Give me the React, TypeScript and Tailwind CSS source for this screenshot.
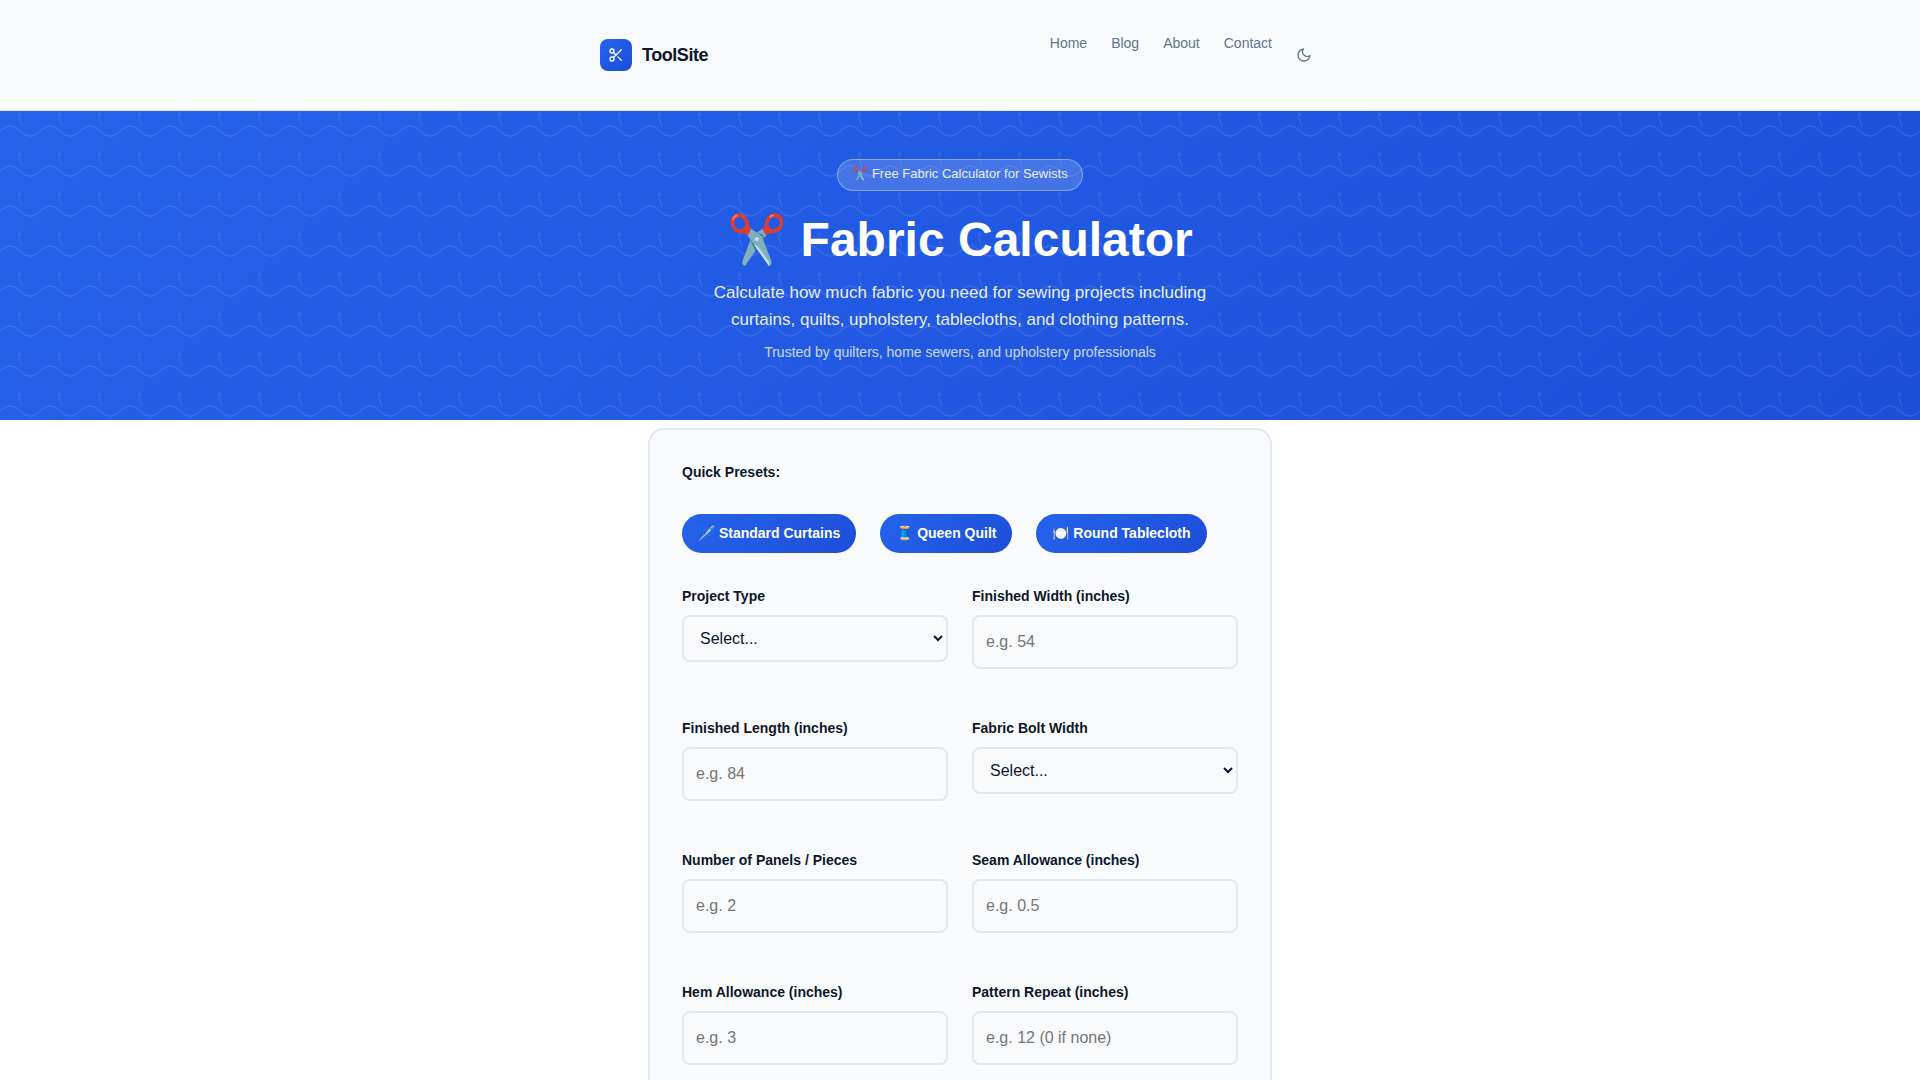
import { useState } from "react";
import { Scissors } from "lucide-react";

const NAV_LINKS = ["Home", "Blog", "About", "Contact"];

const PRESETS = [
  { label: "🪡 Standard Curtains", values: { type: "curtains", width: "54", length: "84", panels: "2" } },
  { label: "🧵 Queen Quilt", values: { type: "quilt", width: "90", length: "95", panels: "1" } },
  { label: "🍽️ Round Tablecloth", values: { type: "tablecloth", width: "60", length: "60", panels: "1" } },
];

type Field = {
  id: string;
  label: string;
  placeholder?: string;
  options?: { value: string; label: string }[];
};

const FIELDS: Field[] = [
  {
    id: "type",
    label: "Project Type",
    options: [
      { value: "curtains", label: "Curtains" },
      { value: "quilt", label: "Quilt" },
      { value: "tablecloth", label: "Tablecloth" },
    ],
  },
  { id: "width", label: "Finished Width (inches)", placeholder: "e.g. 54" },
  { id: "length", label: "Finished Length (inches)", placeholder: "e.g. 84" },
  {
    id: "bolt",
    label: "Fabric Bolt Width",
    options: [
      { value: "45", label: "45 inches" },
      { value: "54", label: "54 inches" },
      { value: "60", label: "60 inches" },
    ],
  },
  { id: "panels", label: "Number of Panels / Pieces", placeholder: "e.g. 2" },
  { id: "seam", label: "Seam Allowance (inches)", placeholder: "e.g. 0.5" },
  { id: "hem", label: "Hem Allowance (inches)", placeholder: "e.g. 3" },
  { id: "repeat", label: "Pattern Repeat (inches)", placeholder: "e.g. 12 (0 if none)" },
];

function MoonIcon() {
  return (
    <svg
      width="16"
      height="16"
      viewBox="0 0 24 24"
      fill="none"
      stroke="currentColor"
      strokeWidth="2"
      strokeLinecap="round"
      strokeLinejoin="round"
      aria-hidden="true"
    >
      <path d="M21 12.79A9 9 0 1 1 11.21 3 7 7 0 0 0 21 12.79z" />
    </svg>
  );
}

// Thread waves with a needle above each one
function StitchPattern() {
  return (
    <svg className="absolute inset-0 h-full w-full" aria-hidden="true">
      <defs>
        <pattern id="stitch" width="40" height="40" patternUnits="userSpaceOnUse">
          <g fill="none" stroke="#fff" strokeOpacity="0.1">
            <path d="M0 20 Q10 10 20 20 T40 20" strokeWidth="1.5" />
            <path d="M18 4 L22 16" />
            <circle cx="20" cy="3" r="1" />
          </g>
        </pattern>
      </defs>
      <rect width="100%" height="100%" fill="url(#stitch)" />
    </svg>
  );
}

export default function App() {
  const [values, setValues] = useState<Record<string, string>>({});

  const setValue = (id: string, value: string) => {
    setValues((prev) => ({ ...prev, [id]: value }));
  };

  return (
    <div className="min-h-screen bg-white font-['Liberation_Sans',Arial,sans-serif] text-base text-[#0f172a]">
      <header className="border-b border-[#e2e8f0] bg-[#f8fafc] py-6">
        <div className="mx-auto flex max-w-[752px] items-center justify-between px-4">
          <a href="#" className="flex items-center gap-[10px] text-lg font-bold tracking-tight">
            <span className="flex size-8 items-center justify-center rounded-lg bg-[linear-gradient(135deg,#2563eb,#1d4ed8)] text-white">
              <Scissors size={16} />
            </span>
            ToolSite
          </a>
          <div className="flex items-center gap-4 text-[#64748b]">
            <nav className="flex gap-6 pt-2 pb-8 text-sm leading-[22px]">
              {NAV_LINKS.map((link) => (
                <a key={link} href="#" className="hover:text-[#2563eb]">
                  {link}
                </a>
              ))}
            </nav>
            <button type="button" aria-label="Toggle dark mode" className="p-2">
              <MoonIcon />
            </button>
          </div>
        </div>
      </header>

      <section className="relative bg-[linear-gradient(135deg,#2563eb,#1d4ed8)] px-4 py-12 text-center text-white">
        <StitchPattern />
        <div className="relative mx-auto flex max-w-[560px] flex-col items-center pb-2">
          <p className="rounded-full border border-white/40 bg-white/18 px-[14px] pt-[5px] pb-[7px] text-[13px] leading-[18px] opacity-90">
            ✂️ Free Fabric Calculator for Sewists
          </p>
          <h1 className="mt-5 text-5xl leading-[58px] font-bold">✂️ Fabric Calculator</h1>
          <p className="mt-[10px] text-[17px] leading-[27px] opacity-90">
            Calculate how much fabric you need for sewing projects including curtains, quilts,
            upholstery, tablecloths, and clothing patterns.
          </p>
          <p className="mt-2 text-sm leading-[23px] opacity-75">
            Trusted by quilters, home sewers, and upholstery professionals
          </p>
        </div>
      </section>

      <main className="mx-auto mt-2 max-w-[624px] rounded-2xl border-2 border-[#e2e8f0] bg-[#f8fafc] p-8">
        <p className="text-sm font-semibold">Quick Presets:</p>
        <div className="mt-8 flex flex-wrap gap-6">
          {PRESETS.map((preset) => (
            <button
              key={preset.label}
              type="button"
              onClick={() => setValues((prev) => ({ ...prev, ...preset.values }))}
              className="rounded-[20px] bg-[linear-gradient(135deg,#2563eb,#1d4ed8)] px-4 py-2 text-sm leading-[23px] font-semibold text-white"
            >
              {preset.label}
            </button>
          ))}
        </div>

        <form className="mt-8 grid grid-cols-1 gap-x-6 gap-y-12 sm:grid-cols-2">
          {FIELDS.map((field) => (
            <div key={field.id} className="flex flex-col gap-2">
              <label htmlFor={field.id} className="text-sm leading-[22px] font-semibold">
                {field.label}
              </label>
              {field.options ? (
                <select
                  id={field.id}
                  value={values[field.id] ?? ""}
                  onChange={(e) => setValue(field.id, e.target.value)}
                  className="h-[47px] w-full rounded-lg border-2 border-[#e2e8f0] bg-[#f8fafc] px-3"
                >
                  <option value="">Select...</option>
                  {field.options.map((option) => (
                    <option key={option.value} value={option.value}>
                      {option.label}
                    </option>
                  ))}
                </select>
              ) : (
                <input
                  id={field.id}
                  type="number"
                  placeholder={field.placeholder}
                  value={values[field.id] ?? ""}
                  onChange={(e) => setValue(field.id, e.target.value)}
                  className="h-[54px] w-full rounded-lg border-2 border-[#e2e8f0] bg-[#f8fafc] px-3 placeholder:text-[#757575]"
                />
              )}
            </div>
          ))}
        </form>
      </main>
    </div>
  );
}
